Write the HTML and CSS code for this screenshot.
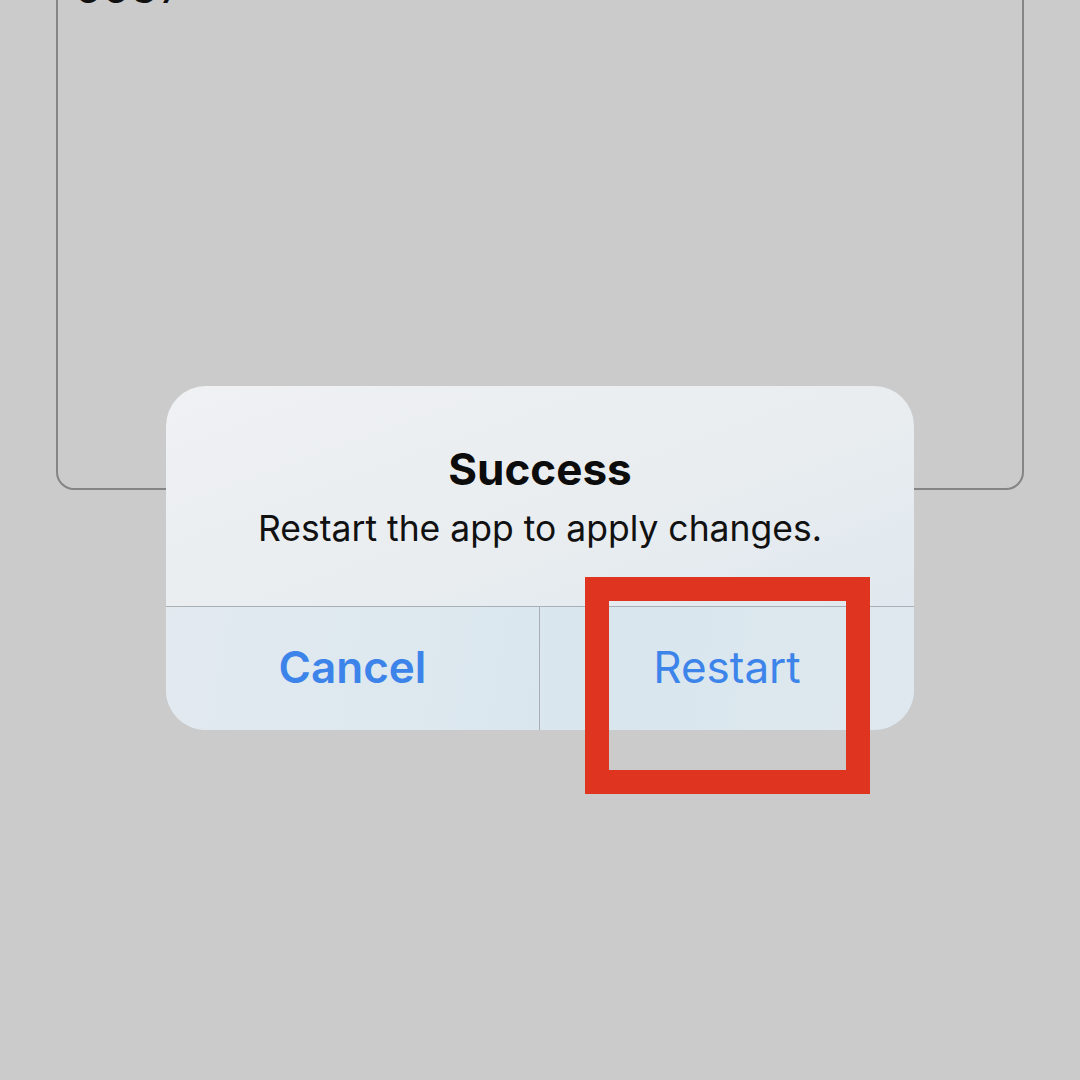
FILE: index.html
```html
<!DOCTYPE html>
<html lang="en">
<head>
    <meta charset="UTF-8">
    <meta name="viewport" content="width=device-width, initial-scale=1.0">
    <title>Success Alert</title>
    <link rel="stylesheet" href="styles.css">
</head>
<body>
    <div class="screen">
        <div class="panel">
            <div class="panel-value">5537</div>
        </div>

        <div class="alert">
            <div class="alert-body">
                <h2 class="alert-title">Success</h2>
                <p class="alert-message">Restart the app to apply changes.</p>
            </div>
            <div class="alert-actions">
                <button class="alert-btn cancel">Cancel</button>
                <button class="alert-btn restart">Restart</button>
            </div>
        </div>

        <!-- annotation box -->
        <div class="highlight"></div>
    </div>
</body>
</html>
```

FILE: styles.css
```css
body {
    margin: 0;
    background-color: #cbcbcb;
    font-family: Inter, "Noto Sans", "Liberation Sans", sans-serif;
    overflow: hidden;
}

.screen {
    position: relative;
    width: 1080px;
    height: 1080px;
    overflow: hidden;
}

.panel {
    margin: -40px 56px 0 56px;
    height: 530px;
    border: 2px solid #858585;
    border-radius: 18px;
    padding: 3px 17px 0;
    box-sizing: border-box;
}

.panel-value {
    font-size: 44px;
    line-height: 1;
    color: #111;
    letter-spacing: 1px;
}

.alert {
    position: absolute;
    top: 386px;
    left: 166px;
    width: 748px;
    height: 344px;
    border-radius: 40px;
    overflow: hidden;
    display: flex;
    flex-direction: column;
    background: linear-gradient(160deg, #eff1f3 0%, #e9edf0 45%, #dbe6ee 100%);
}

.alert-body {
    padding: 57px 20px 0;
    height: 221px;
    box-sizing: border-box;
    text-align: center;
    border-bottom: 1.5px solid #a9b0b5;
}

.alert-title {
    margin: 0 0 12px;
    font-size: 44px;
    line-height: 1.2;
    font-weight: 700;
    color: #0c0c0c;
}

.alert-message {
    margin: 0;
    font-size: 35.5px;
    line-height: 1.2;
    color: #111;
}

.alert-actions {
    flex: 1;
    display: grid;
    grid-template-columns: 1fr 1fr;
    background: linear-gradient(100deg, #e2eaf0 0%, #d9e6ee 60%, #dfe8ee 100%);
}

.alert-btn {
    border: none;
    background: transparent;
    font-family: inherit;
    font-size: 44px;
    color: #3c84ea;
    padding: 0 0 4px;
    cursor: pointer;
}

.alert-btn.cancel {
    font-weight: 600;
    border-right: 1.5px solid #a9b0b5;
}

.alert-btn.restart {
    font-weight: 400;
}

.highlight {
    position: absolute;
    top: 577px;
    left: 585px;
    width: 285px;
    height: 217px;
    border: 24px solid #de3420;
    box-sizing: border-box;
}
```
